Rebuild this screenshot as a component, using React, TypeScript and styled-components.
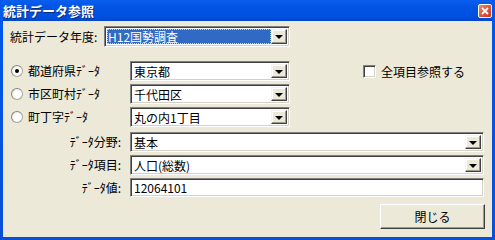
import React from 'react';
import styled, { createGlobalStyle } from 'styled-components';

const GlobalStyle = createGlobalStyle`
  html, body {
    margin: 0;
    padding: 0;
    background: #ece9d8;
  }
  body {
    font-family: "Noto Sans CJK JP", "Liberation Sans", sans-serif;
    font-size: 12px;
    color: #000;
  }
`;

const Window = styled.div`
  width: 495px;
  height: 240px;
  box-sizing: border-box;
  display: flex;
  flex-direction: column;
  background: linear-gradient(180deg, #0058ee 0%, #0a4fd6 100%);
  padding: 0 3px 3px 3px;
`;

const TitleBar = styled.div`
  height: 21px;
  display: flex;
  align-items: center;
  justify-content: space-between;
  padding: 0 1px 0 0;
  background: linear-gradient(180deg, #0a5fef 0%, #0254e6 30%, #0050e0 80%, #0046c8 100%);
`;

const Title = styled.div`
  color: #fff;
  font-weight: bold;
  font-size: 13px;
  text-shadow: 1px 1px 0 #0a2a80;
`;

const CloseBox = styled.div`
  width: 14px;
  height: 14px;
  box-sizing: border-box;
  border: 1px solid #fff;
  border-radius: 2px;
  background: linear-gradient(135deg, #f08a6c 0%, #e0503a 55%, #c83a20 100%);
  display: flex;
  align-items: center;
  justify-content: center;
  margin-right: -1px;
`;

const Client = styled.div`
  flex: 1;
  background: #ece9d8;
  padding: 5px 8px 0 7px;
  display: flex;
  flex-direction: column;
`;

const Row = styled.div<{ $gap?: number }>`
  display: flex;
  align-items: center;
  margin-top: ${p => p.$gap ?? 0}px;
`;

const Label = styled.div<{ $w: number; $right?: boolean }>`
  width: ${p => p.$w}px;
  flex: none;
  text-align: ${p => (p.$right ? 'right' : 'left')};
  padding-right: ${p => (p.$right ? 9 : 0)}px;
  box-sizing: border-box;
  white-space: nowrap;
  line-height: 14px;
`;

const Sunken = styled.div<{ $w: number; $h: number }>`
  width: ${p => p.$w}px;
  height: ${p => p.$h}px;
  box-sizing: border-box;
  flex: none;
  border-top: 1px solid #808080;
  border-left: 1px solid #808080;
  border-right: 1px solid #fff;
  border-bottom: 1px solid #fff;
  box-shadow: inset 1px 1px 0 #404040, inset -1px -1px 0 #d4d0c8;
  background: #fff;
  display: flex;
  align-items: center;
  padding: 2px;
`;

const Value = styled.div<{ $selected?: boolean }>`
  flex: 1;
  height: 100%;
  display: flex;
  align-items: center;
  padding-left: 1px;
  box-sizing: border-box;
  white-space: nowrap;
  color: ${p => (p.$selected ? '#fff' : '#000')};
  background: ${p => (p.$selected ? '#316ac5' : 'transparent')};
  outline: ${p => (p.$selected ? '1px dotted #c8d0e8' : 'none')};
  outline-offset: -1px;
`;

const ArrowButton = styled.div`
  width: 16px;
  height: 100%;
  flex: none;
  box-sizing: border-box;
  background: #ece9d8;
  border-top: 1px solid #f4f3ee;
  border-left: 1px solid #f4f3ee;
  border-right: 1px solid #404040;
  border-bottom: 1px solid #404040;
  box-shadow: inset -1px -1px 0 #9d9a8c, inset 1px 1px 0 #fff;
  display: flex;
  align-items: center;
  justify-content: center;
`;

const Triangle = styled.div`
  width: 0;
  height: 0;
  border-left: 4px solid transparent;
  border-right: 4px solid transparent;
  border-top: 4px solid #000;
  margin-top: 1px;
`;

const Radio = styled.div<{ $checked?: boolean }>`
  width: 12px;
  height: 12px;
  box-sizing: border-box;
  border-radius: 50%;
  border: 1px solid #a8a59a;
  border-top-color: #8a877c;
  border-left-color: #8a877c;
  background: radial-gradient(circle at 60% 60%, #fff 40%, #e4e2d8 100%);
  display: flex;
  align-items: center;
  justify-content: center;
  margin: 0 5px 0 1px;
  flex: none;
  &::after {
    content: '';
    width: 4px;
    height: 4px;
    border-radius: 50%;
    background: ${p => (p.$checked ? '#000' : 'transparent')};
  }
`;

const RadioLabel = styled.div`
  width: 102px;
  flex: none;
  white-space: nowrap;
  line-height: 14px;
`;

const Check = styled.div`
  display: flex;
  align-items: center;
  margin-left: 73px;
  gap: 5px;
`;

const CheckBox = styled.div`
  width: 13px;
  height: 13px;
  box-sizing: border-box;
  border-top: 1px solid #808080;
  border-left: 1px solid #808080;
  border-right: 1px solid #fff;
  border-bottom: 1px solid #fff;
  box-shadow: inset 1px 1px 0 #404040, inset -1px -1px 0 #d4d0c8;
  background: #fff;
`;

const Footer = styled.div`
  display: flex;
  justify-content: flex-end;
  margin-top: 7px;
`;

const Button = styled.div`
  width: 105px;
  height: 25px;
  box-sizing: border-box;
  background: #ece9d8;
  border-top: 1px solid #fff;
  border-left: 1px solid #fff;
  border-right: 1px solid #404040;
  border-bottom: 1px solid #404040;
  box-shadow: inset -1px -1px 0 #9d9a8c;
  display: flex;
  align-items: center;
  justify-content: center;
  margin-right: -1px;
`;

const Combo: React.FC<{ w: number; h: number; value: string; selected?: boolean }> = ({ w, h, value, selected }) => (
  <Sunken $w={w} $h={h}>
    <Value $selected={selected}>{value}</Value>
    <ArrowButton>
      <Triangle />
    </ArrowButton>
  </Sunken>
);

const regions = [
  { label: '都道府県ﾃﾞｰﾀ', value: '東京都', checked: true },
  { label: '市区町村ﾃﾞｰﾀ', value: '千代田区' },
  { label: '町丁字ﾃﾞｰﾀ', value: '丸の内1丁目' },
];

export default function App() {
  return (
    <>
      <GlobalStyle />
      <Window>
        <TitleBar>
          <Title>統計データ参照</Title>
          <CloseBox>
            <svg width="8" height="8" viewBox="0 0 8 8">
              <path d="M1,1 L7,7 M7,1 L1,7" stroke="#fff" strokeWidth="1.8" />
            </svg>
          </CloseBox>
        </TitleBar>
        <Client>
          <Row>
            <Label $w={94}>統計データ年度:</Label>
            <Combo w={186} h={21} value="H12国勢調査" selected />
          </Row>
          {regions.map((r, i) => (
            <Row key={r.label} $gap={i === 0 ? 14 : 3}>
              <Radio $checked={r.checked} />
              <RadioLabel>{r.label}</RadioLabel>
              <Combo w={160} h={20} value={r.value} />
              {i === 0 && (
                <Check>
                  <CheckBox />
                  <span>全項目参照する</span>
                </Check>
              )}
            </Row>
          ))}
          <Row $gap={5}>
            <Label $w={120} $right>ﾃﾞｰﾀ分野:</Label>
            <Combo w={354} h={20} value="基本" />
          </Row>
          <Row $gap={3}>
            <Label $w={120} $right>ﾃﾞｰﾀ項目:</Label>
            <Combo w={354} h={20} value="人口(総数)" />
          </Row>
          <Row $gap={3}>
            <Label $w={120} $right>ﾃﾞｰﾀ値:</Label>
            <Sunken $w={354} $h={19}>
              <Value>12064101</Value>
            </Sunken>
          </Row>
          <Footer>
            <Button>閉じる</Button>
          </Footer>
        </Client>
      </Window>
    </>
  );
}
